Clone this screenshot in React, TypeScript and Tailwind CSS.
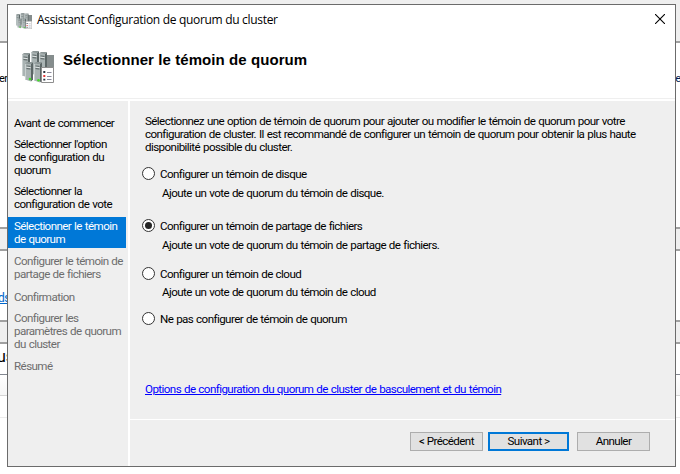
import React from 'react';
import { clsx } from 'clsx';

interface Step {
  lines: string[];
  className: string;
}

const steps: Step[] = [
  { lines: ['Avant de commencer'], className: 'mt-[14px] pt-[2px] pb-[3px] text-black' },
  { lines: ["Sélectionner l'option", 'de configuration du', 'quorum'], className: 'mt-[3px] pt-[2px] pb-[3px] text-black' },
  { lines: ['Sélectionner la', 'configuration de vote'], className: 'mt-[3px] pt-[2px] pb-[3px] text-black' },
  { lines: ['Sélectionner le témoin', 'de quorum'], className: 'mt-[3px] mr-[2px] pt-[3px] pb-[2px] bg-[#0078d7] text-white' },
  { lines: ['Configurer le témoin de', 'partage de fichiers'], className: 'mt-[5px] pt-[2px] pb-[3px] text-[#6d6d6d]' },
  { lines: ['Confirmation'], className: 'mt-[5px] pt-[2px] pb-[3px] text-[#6d6d6d]' },
  { lines: ['Configurer les', 'paramètres de quorum', 'du cluster'], className: 'mt-[3px] pt-[2px] pb-[3px] text-[#6d6d6d]' },
  { lines: ['Résumé'], className: 'mt-[4px] pt-[2px] pb-[3px] text-[#6d6d6d]' },
];

const options = [
  { label: 'Configurer un témoin de disque', hint: 'Ajoute un vote de quorum du témoin de disque.', rowClass: 'mt-[13px]', hintClass: 'mt-[7px]' },
  { label: 'Configurer un témoin de partage de fichiers', hint: 'Ajoute un vote de quorum du témoin de partage de fichiers.', rowClass: 'mt-[19px]', hintClass: 'mt-[7px]', checked: true },
  { label: 'Configurer un témoin de cloud', hint: 'Ajoute un vote de quorum du témoin de cloud', rowClass: 'mt-[15px]', hintClass: 'mt-[6px]' },
  { label: 'Ne pas configurer de témoin de quorum', rowClass: 'mt-[13px]' },
];

const Server: React.FC<{ x: number; y: number; h: number }> = ({ x, y, h }) => (
  <g transform={`translate(${x} ${y})`}>
    <path d={`M0 1.5h6v${h - 1}l-6-2z`} fill="#a9b3b3" />
    <path d={`M6 1.5l2-1v${h - 2}l-2 2z`} fill="#5c6666" />
    <path d="M0 1.5 2 0h6v.5l-2 1.4z" fill="#8c9696" />
    <path d={`M.5 2v${h - 3}`} stroke="#c9d0d0" />
    <path d="M1.5 4l4 .4M1.5 6.6l4 .4" stroke="#4d5757" strokeWidth="0.9" />
    <path d="M1.5 5.2l4 .4" stroke="#e6eaea" strokeWidth="0.9" />
  </g>
);

const ClusterIcon: React.FC<{ size: number }> = ({ size }) => (
  <svg width={size} height={size} viewBox="0 0 32 32" className="block shrink-0">
    <path d="M24 4h8v13h-8z" fill="#858d8d" />
    <Server x={0} y={2} h={24} />
    <Server x={9} y={0} h={24} />
    <Server x={17} y={1} h={22} />
    <Server x={3} y={11} h={19} />
    <Server x={12} y={11} h={20} />
    <circle cx="8" cy="28" r="1.3" fill="#45d82b" />
    <circle cx="16.5" cy="29.2" r="1.3" fill="#45d82b" />
    <path d="M19.5 16.5h12v15h-12z" fill="#fff" stroke="#8e8e8e" />
    <path d="M21.3 21h2M21.3 28.6h2" stroke="#2b3440" strokeWidth="1.8" />
    <path d="M21.3 25h2" stroke="#e02020" strokeWidth="1.8" />
    <path d="M25 21.5h4.5M25 25.5h4.5M25 28.5h4.5" stroke="#8b8a9c" />
  </svg>
);

const Radio: React.FC<{ checked?: boolean }> = ({ checked }) => (
  <span className="flex size-[13px] shrink-0 items-center justify-center rounded-full border border-[#333] bg-white">
    {checked && <span className="size-[7px] rounded-full bg-[#262626]" />}
  </span>
);

// Strips of the parent window that stick out around the dialog
const ParentWindow: React.FC = () => (
  <div className="flex h-full flex-col">
    <div className="h-[43px] border-b-2 border-[#a0a0a0] bg-[#efefef]" />
    <div className="flex h-[184px] items-start justify-between pt-[29px] text-[11px] leading-[14px] text-black">
      <span className="-ml-[1px] tracking-[-0.6px]">er</span>
      <span className="-mr-[1px] text-[#001c50]">e</span>
    </div>
    <div className="h-[24px] border-y-2 border-[#a0a0a0] bg-[#efefef]" />
    <div className="h-[69px] pt-[40px] text-[12px] leading-[14px] tracking-[-0.5px] text-[#0066cc]">
      <span className="-ml-[2px] underline">ds</span>
    </div>
    <div className="h-[24px] border-y-2 border-[#a0a0a0] bg-[#efefef]" />
    <div className="h-[31px] border-b border-[#828790] pt-[4px] text-[16px] leading-[18px] text-black">
      <span className="-ml-[3px]">us</span>
    </div>
    <div className="h-[21px] border-b border-[#d5d5d5] bg-gradient-to-b from-white to-[#f6f6f6]" />
    <div className="h-[22px] border-b border-[#ececec]" />
  </div>
);

export default function App() {
  return (
    <div className="relative h-[474px] w-[680px] overflow-hidden bg-white font-['Roboto','Liberation_Sans',sans-serif]">
      <ParentWindow />

      <div className="absolute top-[4px] left-[7px] flex h-[463px] w-[669px] flex-col border border-[#6b6b6b] bg-white text-[11.6px] leading-[13px] tracking-[-0.58px] [word-spacing:0.6px] text-black">
        {/* Title bar */}
        <div className="flex h-[31px] shrink-0 items-center justify-between pr-[10px] pl-[8px]">
          <div className="flex items-center gap-[5px]">
            <ClusterIcon size={16} />
            <span className="mb-[2px] font-['Open_Sans','Noto_Sans',sans-serif] text-[12px] leading-4 tracking-[-0.31px] [word-spacing:0] whitespace-nowrap">
              Assistant Configuration de quorum du cluster
            </span>
          </div>
          <svg width="10" height="10" viewBox="0 0 10 10" className="mb-[3px]">
            <path d="M0 0l10 10M10 0L0 10" stroke="#000" strokeWidth="1.1" />
          </svg>
        </div>

        {/* Page heading */}
        <div className="flex h-[63px] shrink-0 items-start border-b border-[#efefef] pt-[15px] pl-[14px]">
          <ClusterIcon size={32} />
          <h1 className="mt-[1px] ml-[9px] font-['Liberation_Sans',Arial,sans-serif] text-[15px] leading-4 font-bold tracking-[0.08px] [word-spacing:0] whitespace-nowrap">
            Sélectionner le témoin de quorum
          </h1>
        </div>

        <div className="mt-[2px] flex min-h-0 flex-1 gap-[2px]">
          <nav className="w-[120px] shrink-0 bg-[#efefef]">
            {steps.map((step) => (
              <div key={step.lines[0]} className={clsx('pl-[6px] whitespace-nowrap', step.className)}>
                {step.lines.map((line) => (
                  <div key={line}>{line}</div>
                ))}
              </div>
            ))}
          </nav>

          <div className="flex min-w-0 flex-1 flex-col">
            <main className="h-[318px] bg-[#efefef] pt-[14px] pl-[15px] whitespace-nowrap">
              <p>
                Sélectionnez une option de témoin de quorum pour ajouter ou modifier le témoin de quorum pour votre
                <br />
                configuration de cluster. Il est recommandé de configurer un témoin de quorum pour obtenir la plus haute
                <br />
                disponibilité possible du cluster.
              </p>

              {options.map((option) => (
                <div key={option.label} className={clsx('-ml-[3px]', option.rowClass)}>
                  <label className="flex h-[13px] items-start gap-[5px]">
                    <Radio checked={option.checked} />
                    <span className="leading-[15px]">{option.label}</span>
                  </label>
                  {option.hint && <p className={clsx('pl-[20px]', option.hintClass)}>{option.hint}</p>}
                </div>
              ))}

              <a href="#" className="mt-[58px] block w-fit text-[#0000ff] underline">
                Options de configuration du quorum de cluster de basculement et du témoin
              </a>
            </main>

            <footer className="mt-px flex flex-1 items-start justify-end bg-[#efefef] pt-[12px] pr-[25px]">
              <button className="h-[19px] w-[73px] border border-[#adadad] bg-[#e1e1e1]">&lt; Précédent</button>
              <button className="ml-[5px] h-[19px] w-[81px] border-2 border-[#0078d7] bg-[#e1e1e1]">Suivant &gt;</button>
              <button className="ml-[8px] h-[19px] w-[73px] border border-[#adadad] bg-[#e1e1e1]">Annuler</button>
            </footer>
          </div>
        </div>
      </div>
    </div>
  );
}
